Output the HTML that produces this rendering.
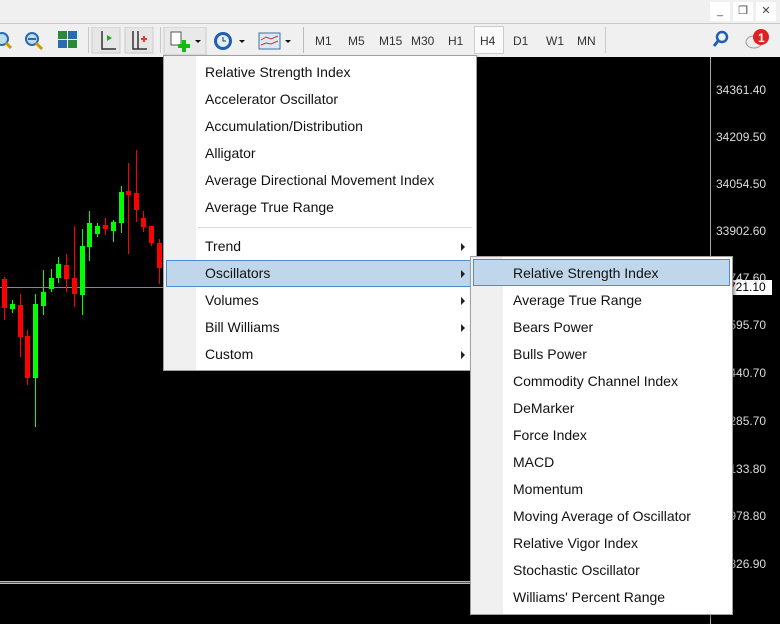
<!DOCTYPE html>
<html><head><meta charset="utf-8"><style>
*{margin:0;padding:0;box-sizing:border-box}
body{width:780px;height:624px;overflow:hidden;background:#000;position:relative;font-family:"Liberation Sans",sans-serif}
.abs{position:absolute}
#top{left:0;top:0;width:780px;height:23px;background:#f0f0f0}
#tb{left:0;top:23px;width:780px;height:34px;background:#f0f0f0;border-top:1px solid #c8c8c8}
.wb{top:2px;width:20px;height:19px;background:#fff;font-size:11px;color:#444;text-align:center;line-height:19px}
.tf{top:34px;font-size:12px;color:#333}
.sep{top:27px;width:1px;height:26px;background:#c8c8c8}
.w{position:absolute;width:1px}
.b{position:absolute;width:5px}
.r{background:#f00}.g{background:#0f0}
.pl{position:absolute;left:716px;font-size:12px;color:#ddd}
.menu{position:absolute;background:#fff;border:1px solid #a0a0a0;box-shadow:2px 2px 3px rgba(0,0,0,.4)}
.gut{position:absolute;left:0;top:0;bottom:0;background:#f0f0f0}
.it{position:absolute;font-size:14px;color:#111;white-space:nowrap}
.hl{position:absolute;background:#c0d6ea;border:1px solid #4a90d0}
.ar{position:absolute;width:0;height:0;border-left:4px solid #222;border-top:4px solid transparent;border-bottom:4px solid transparent}
</style></head><body>
<div id="top" class="abs"></div>
<div class="abs wb" style="left:710px">_</div>
<div class="abs wb" style="left:733px">&#x2750;</div>
<div class="abs wb" style="left:756px">✕</div>
<div id="tb" class="abs"></div>
<!-- toolbar icons -->
<svg class="abs" style="left:0;top:27px" width="300" height="28">
<circle cx="2" cy="12" r="6" fill="#bde" stroke="#2a6ab0" stroke-width="2"/><line x1="6" y1="16" x2="11" y2="21" stroke="#c90" stroke-width="3"/>
<circle cx="32" cy="12" r="6" fill="#bde" stroke="#2a6ab0" stroke-width="2"/><line x1="28" y1="12" x2="36" y2="12" stroke="#2a6ab0" stroke-width="2"/><line x1="36" y1="16" x2="42" y2="22" stroke="#c90" stroke-width="3"/>
<rect x="58" y="4" width="9" height="8" fill="#2a8a3a"/><rect x="68" y="4" width="9" height="8" fill="#2a6ab0"/><rect x="58" y="13" width="9" height="8" fill="#2a6ab0"/><rect x="68" y="13" width="9" height="8" fill="#2a8a3a"/>
<rect x="92" y="0" width="28" height="26" fill="#e6e6e6" stroke="#ccc"/><rect x="125" y="0" width="28" height="26" fill="#e6e6e6" stroke="#ccc"/>
<path d="M102 4v18h14M102 22" stroke="#333" fill="none" stroke-width="1.5"/><path d="M107 8l5 3-5 3z" fill="#2a2"/>
<path d="M133 4v18h14M138 4v18" stroke="#333" fill="none" stroke-width="1.5"/><path d="M141 12h6M144 9v6" stroke="#e33" stroke-width="2"/>
<rect x="164" y="0" width="42" height="28" fill="#e9e9e9" stroke="#ccc"/>
<rect x="171" y="5" width="10" height="13" fill="#fff" stroke="#555"/><path d="M178 19h12M184 13v12" stroke="#1b1" stroke-width="4"/><path d="M195 13l3 3 3-3z" fill="#111"/>
<circle cx="223" cy="14" r="9" fill="#1f5fb0"/><circle cx="223" cy="14" r="6" fill="#dfeefa"/><path d="M223 10v4h3" stroke="#333" fill="none"/><path d="M239 13l3 3 3-3z" fill="#111"/>
<rect x="259" y="6" width="21" height="16" fill="#dbe9f6" stroke="#3a6ea8"/><path d="M261 13l5-3 5 2 7-3M261 18l5-2 5 1 7-3" stroke="#c33" fill="none"/><path d="M285 13l3 3 3-3z" fill="#111"/>
</svg>
<div class="abs sep" style="left:88px"></div><div class="abs sep" style="left:160px"></div><div class="abs sep" style="left:303px;background:#bbb"></div><div class="abs sep" style="left:605px"></div>
<div class="abs" style="left:474px;top:26px;width:30px;height:28px;background:#fafafa;border:1px solid #ccc"></div>
<div class="abs tf" style="left:315px">M1</div><div class="abs tf" style="left:348px">M5</div><div class="abs tf" style="left:379px">M15</div><div class="abs tf" style="left:411px">M30</div><div class="abs tf" style="left:448px">H1</div><div class="abs tf" style="left:480px">H4</div><div class="abs tf" style="left:513px">D1</div><div class="abs tf" style="left:546px">W1</div><div class="abs tf" style="left:577px">MN</div>
<svg class="abs" style="left:705px;top:27px" width="75" height="28">
<circle cx="17" cy="10" r="5" fill="none" stroke="#1f5fb0" stroke-width="2.5"/><line x1="13" y1="14" x2="9" y2="19" stroke="#1f5fb0" stroke-width="3"/>
<ellipse cx="49" cy="15" rx="8" ry="6" fill="#eee" stroke="#999"/><circle cx="56" cy="10" r="8" fill="#d22"/><text x="53" y="15" font-size="12" font-weight="bold" fill="#fff" font-family="Liberation Sans">1</text>
</svg>
<!-- chart -->
<div class="abs" style="left:710px;top:57px;width:1px;height:567px;background:#aaa"></div>
<div class="abs" style="left:0;top:287px;width:710px;height:1px;background:#7a8a98"></div>
<div class="abs" style="left:0;top:581px;width:710px;height:3px;border-top:1px solid #bbb;border-bottom:1px solid #bbb;background:#555"></div>
<div class="abs" style="left:727px;top:280px;width:45px;height:15px;background:#fff;font-size:12px;color:#000;padding-left:2px">721.10</div>
<div class="pl" style="top:83px">34361.40</div><div class="pl" style="top:130px">34209.50</div><div class="pl" style="top:177px">34054.50</div><div class="pl" style="top:224px">33902.60</div><div class="pl" style="top:271px">33747.60</div><div class="pl" style="top:318px">33595.70</div><div class="pl" style="top:366px">33440.70</div><div class="pl" style="top:414px">33285.70</div><div class="pl" style="top:462px">33133.80</div><div class="pl" style="top:509px">32978.80</div><div class="pl" style="top:557px">32826.90</div>
<!-- candles -->
<div class="w r" style="left:4px;top:277px;height:43px"></div><div class="b r" style="left:2px;top:279px;height:29px"></div>
<div class="w g" style="left:12px;top:300px;height:13px"></div><div class="b g" style="left:10px;top:304px;height:5px"></div>
<div class="w r" style="left:20px;top:294px;height:63px"></div><div class="b r" style="left:18px;top:305px;height:32px"></div>
<div class="w r" style="left:27px;top:330px;height:55px"></div><div class="b r" style="left:25px;top:336px;height:42px"></div>
<div class="w g" style="left:35px;top:294px;height:133px"></div><div class="b g" style="left:33px;top:304px;height:74px"></div>
<div class="w g" style="left:43px;top:270px;height:45px"></div><div class="b g" style="left:41px;top:292px;height:14px"></div>
<div class="w g" style="left:51px;top:269px;height:23px"></div><div class="b g" style="left:49px;top:278px;height:11px"></div>
<div class="w g" style="left:58px;top:257px;height:26px"></div><div class="b g" style="left:56px;top:264px;height:14px"></div>
<div class="w r" style="left:66px;top:254px;height:38px"></div><div class="b r" style="left:64px;top:265px;height:14px"></div>
<div class="w r" style="left:74px;top:226px;height:81px"></div><div class="b r" style="left:72px;top:278px;height:16px"></div>
<div class="w g" style="left:82px;top:229px;height:86px"></div><div class="b g" style="left:80px;top:246px;height:49px"></div>
<div class="w g" style="left:89px;top:211px;height:50px"></div><div class="b g" style="left:87px;top:223px;height:24px"></div>
<div class="w g" style="left:97px;top:223px;height:14px"></div><div class="b g" style="left:95px;top:226px;height:8px"></div>
<div class="w r" style="left:105px;top:218px;height:17px"></div><div class="b r" style="left:103px;top:225px;height:4px"></div>
<div class="w g" style="left:113px;top:220px;height:22px"></div><div class="b g" style="left:111px;top:222px;height:9px"></div>
<div class="w g" style="left:121px;top:186px;height:47px"></div><div class="b g" style="left:119px;top:192px;height:31px"></div>
<div class="w r" style="left:128px;top:163px;height:91px"></div><div class="b r" style="left:126px;top:191px;height:4px"></div>
<div class="w r" style="left:136px;top:150px;height:72px"></div><div class="b r" style="left:134px;top:193px;height:17px"></div>
<div class="w r" style="left:143px;top:211px;height:21px"></div><div class="b r" style="left:141px;top:218px;height:9px"></div>
<div class="w r" style="left:151px;top:226px;height:20px"></div><div class="b r" style="left:149px;top:226px;height:17px"></div>
<div class="w r" style="left:159px;top:239px;height:45px"></div><div class="b r" style="left:157px;top:243px;height:25px"></div>
<!-- menu 1 -->
<div class="menu" style="left:163px;top:55px;width:314px;height:316px"><div class="gut" style="width:32px"></div>
<div class="abs" style="left:34px;right:4px;top:171px;height:1px;background:#d8d8d8"></div>
<div class="hl" style="left:2px;top:204px;width:306px;height:27px"></div>
<div class="it" style="left:41px;top:8px">Relative Strength Index</div>
<div class="it" style="left:41px;top:35px">Accelerator Oscillator</div>
<div class="it" style="left:41px;top:62px">Accumulation/Distribution</div>
<div class="it" style="left:41px;top:89px">Alligator</div>
<div class="it" style="left:41px;top:116px">Average Directional Movement Index</div>
<div class="it" style="left:41px;top:143px">Average True Range</div>
<div class="it" style="left:41px;top:182px">Trend</div>
<div class="it" style="left:41px;top:209px">Oscillators</div>
<div class="it" style="left:41px;top:236px">Volumes</div>
<div class="it" style="left:41px;top:263px">Bill Williams</div>
<div class="it" style="left:41px;top:290px">Custom</div>
<div class="ar" style="left:297px;top:187px"></div><div class="ar" style="left:297px;top:214px"></div><div class="ar" style="left:297px;top:241px"></div><div class="ar" style="left:297px;top:268px"></div><div class="ar" style="left:297px;top:295px"></div>
</div>
<!-- menu 2 -->
<div class="menu" style="left:470px;top:256px;width:263px;height:359px"><div class="gut" style="width:32px"></div>
<div class="hl" style="left:2px;top:2px;width:257px;height:27px"></div>
<div class="it" style="left:42px;top:8px">Relative Strength Index</div>
<div class="it" style="left:42px;top:35px">Average True Range</div>
<div class="it" style="left:42px;top:62px">Bears Power</div>
<div class="it" style="left:42px;top:89px">Bulls Power</div>
<div class="it" style="left:42px;top:116px">Commodity Channel Index</div>
<div class="it" style="left:42px;top:143px">DeMarker</div>
<div class="it" style="left:42px;top:170px">Force Index</div>
<div class="it" style="left:42px;top:197px">MACD</div>
<div class="it" style="left:42px;top:224px">Momentum</div>
<div class="it" style="left:42px;top:251px">Moving Average of Oscillator</div>
<div class="it" style="left:42px;top:278px">Relative Vigor Index</div>
<div class="it" style="left:42px;top:305px">Stochastic Oscillator</div>
<div class="it" style="left:42px;top:332px">Williams' Percent Range</div>
</div>
</body></html>
